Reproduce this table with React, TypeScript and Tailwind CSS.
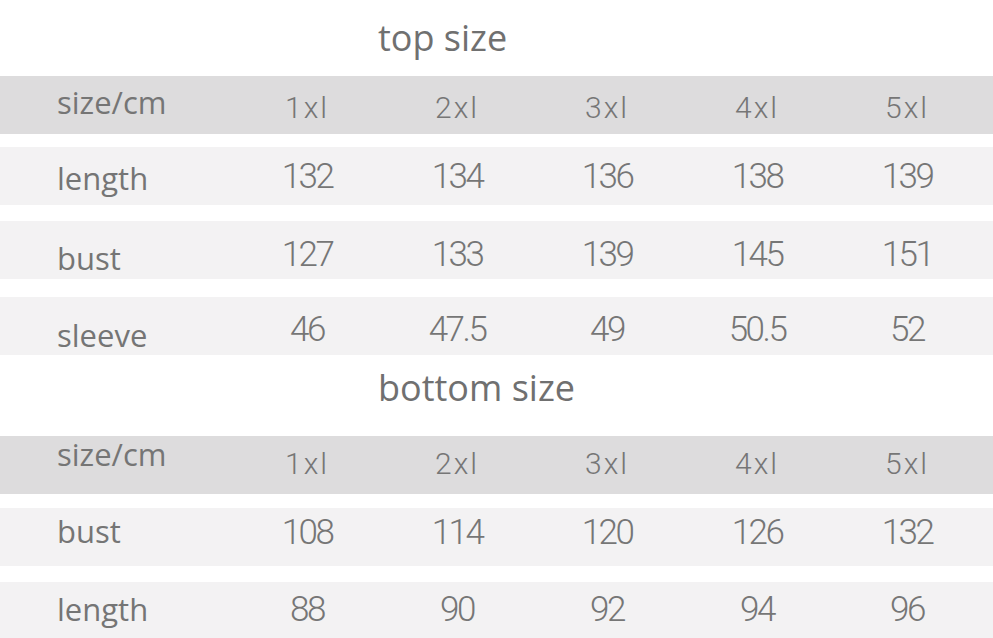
import React from "react";

type Row = { label: string; values: string[]; bg: string; h: string; lp: string; vp: string; mt: string; header?: boolean };

const label = "font-['Open_Sans',sans-serif] text-[31px] leading-none text-[#757575]";
const num = "font-['Roboto',sans-serif] font-light text-[35px] tracking-[-2.5px] leading-none text-[#767676]";
const hnum = "font-['Roboto',sans-serif] font-light text-[30px] tracking-[2px] leading-none text-[#767676]";

function TableRow({ r }: { r: Row }) {
  return (
    <div className={`grid grid-cols-[232px_repeat(5,150px)] ${r.bg} ${r.h} ${r.mt}`}>
      <div className={`pl-[57px] ${r.lp} ${label}`}>{r.label}</div>
      {r.values.map((v, i) => (
        <div key={i} className={`text-center ${r.vp} ${r.header ? hnum : num}`}>
          {v}
        </div>
      ))}
    </div>
  );
}

const sizes = ["1xl", "2xl", "3xl", "4xl", "5xl"];

const top: Row[] = [
  { label: "size/cm", values: sizes, bg: "bg-[#dddcdd]", h: "h-[58px]", lp: "pt-[11px]", vp: "pt-[17px]", mt: "mt-0", header: true },
  { label: "length", values: ["132", "134", "136", "138", "139"], bg: "bg-[#f3f2f3]", h: "h-[58px]", lp: "pt-[16px]", vp: "pt-[12px]", mt: "mt-[13px]" },
  { label: "bust", values: ["127", "133", "139", "145", "151"], bg: "bg-[#f3f2f3]", h: "h-[58px]", lp: "pt-[22px]", vp: "pt-[16px]", mt: "mt-[16px]" },
  { label: "sleeve", values: ["46", "47.5", "49", "50.5", "52"], bg: "bg-[#f3f2f3]", h: "h-[58px]", lp: "pt-[23px]", vp: "pt-[15px]", mt: "mt-[18px]" },
];

const bottom: Row[] = [
  { label: "size/cm", values: sizes, bg: "bg-[#dddcdd]", h: "h-[58px]", lp: "pt-[3px]", vp: "pt-[13px]", mt: "mt-0", header: true },
  { label: "bust", values: ["108", "114", "120", "126", "132"], bg: "bg-[#f3f2f3]", h: "h-[58px]", lp: "pt-[8px]", vp: "pt-[7px]", mt: "mt-[14px]" },
  { label: "length", values: ["88", "90", "92", "94", "96"], bg: "bg-[#f3f2f3]", h: "h-[56px]", lp: "pt-[12px]", vp: "pt-[10px]", mt: "mt-[16px]" },
];

export default function App() {
  return (
    <div className="w-[993px] h-[638px] bg-white overflow-hidden">
      <div className="h-[76px] pt-[20px] pl-[378px] font-['Open_Sans',sans-serif] text-[36px] leading-none text-[#707070]">top size</div>
      {top.map((r, i) => (
        <TableRow key={i} r={r} />
      ))}
      <div className="h-[81px] pt-[15px] pl-[378px] font-['Open_Sans',sans-serif] text-[36px] leading-none text-[#707070]">bottom size</div>
      {bottom.map((r, i) => (
        <TableRow key={i} r={r} />
      ))}
    </div>
  );
}
